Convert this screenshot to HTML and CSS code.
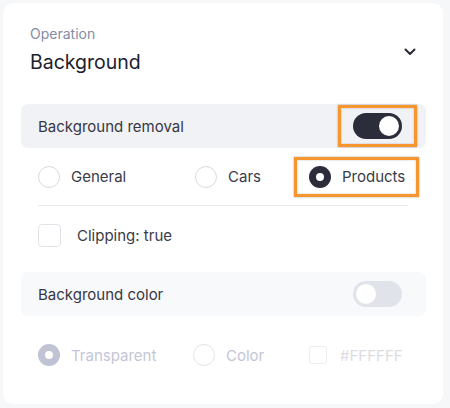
FILE: index.html
```html
<!DOCTYPE html>
<html>
<head>
<meta charset="utf-8">
<link rel="stylesheet" href="styles.css">
</head>
<body>
<div class="card">
  <div class="select">
    <div class="select-text">
      <div class="select-label">Operation</div>
      <div class="select-value">Background</div>
    </div>
    <svg class="chevron" width="12" height="8" viewBox="0 0 12 8"><path d="M1.5 1.5 L6 6 L10.5 1.5" fill="none" stroke="#2a2b36" stroke-width="2" stroke-linecap="round" stroke-linejoin="round"/></svg>
  </div>

  <div class="section on">
    <span class="section-title">Background removal</span>
    <span class="hl hl-toggle"><span class="toggle toggle-on"><span class="knob"></span></span></span>
  </div>

  <div class="radios radios-top">
    <label class="opt"><span class="radio"></span><span>General</span></label>
    <label class="opt"><span class="radio"></span><span>Cars</span></label>
    <label class="opt hl hl-opt"><span class="radio radio-on"></span><span>Products</span></label>
  </div>
  <div class="divider"></div>

  <div class="check-row">
    <span class="checkbox"></span><span>Clipping: true</span>
  </div>

  <div class="section off">
    <span class="section-title">Background color</span>
    <span class="toggle toggle-off"><span class="knob"></span></span>
  </div>

  <div class="radios radios-bottom disabled">
    <label class="opt"><span class="radio radio-dis-on"></span><span>Transparent</span></label>
    <label class="opt"><span class="radio radio-dis"></span><span>Color</span></label>
    <label class="opt hex"><span class="checkbox small"></span><span>#FFFFFF</span></label>
  </div>
</div>
</body>
</html>
```
FILE: styles.css
```css
* { box-sizing: border-box; }
html, body { margin: 0; padding: 0; }
body {
  background: #f6f7f9;
  font-family: Inter, "Noto Sans", sans-serif;
  width: 450px;
  height: 408px;
  padding: 3px 0 0 3px;
}
.card {
  width: 440px;
  height: 401px;
  background: #ffffff;
  border-radius: 10px;
  padding: 21px 17px 0 18px;
}
.select {
  display: flex;
  align-items: center;
  justify-content: space-between;
  padding: 0 10px 0 9px;
  height: 61px;
}
.select-text { align-self: flex-start; }
.select-label {
  font-size: 14px;
  line-height: 20px;
  color: #858ca4;
}
.select-value {
  font-size: 19.5px;
  line-height: 28px;
  color: #20212c;
  margin-top: 4px;
}
.chevron { margin-top: -6px; }
.section {
  margin-top: 19px;
  height: 44px;
  border-radius: 7px;
  display: flex;
  align-items: center;
  justify-content: space-between;
  padding: 0 24px 0 17px;
  font-size: 15px;
  color: #363744;
}
.section.on { background: #f1f2f6; }
.section.off { background: #f8f9fb; margin-top: 25px; }
.toggle {
  width: 49px;
  height: 26px;
  border-radius: 13px;
  display: flex;
  align-items: center;
  padding: 0 3px;
}
.knob {
  width: 20px;
  height: 20px;
  border-radius: 50%;
  background: #ffffff;
}
.toggle-on { background: #2c2d3a; justify-content: flex-end; }
.toggle-off { background: #e1e3ea; justify-content: flex-start; }
.hl {
  border: 3px solid #f7952f;
  box-shadow: 0 0 2px rgba(0,0,0,0.35), inset 0 0 2px rgba(0,0,0,0.25);
}
.hl-toggle {
  margin-right: -15px;
  padding: 5px 12px;
  display: flex;
}
.radios {
  display: grid;
  align-items: center;
  padding-left: 17px;
  font-size: 15px;
  color: #3a3b48;
}
.radios-top {
  grid-template-columns: 157px 114px auto;
  height: 57px;
}
.opt {
  display: flex;
  align-items: center;
  gap: 11px;
}
.hl-opt {
  margin-left: -15px;
  width: 125px;
  height: 40px;
  padding-left: 12px;
}
.radio {
  width: 22px;
  height: 22px;
  border-radius: 50%;
  border: 1px solid #d8dae2;
  display: inline-block;
  flex: none;
}
.radio-on {
  border: 7px solid #2c2d3a;
  background: #ffffff;
}
.divider {
  height: 1px;
  background: #e9eaee;
  margin: 0 18px 0 17px;
}
.check-row {
  display: flex;
  align-items: center;
  gap: 16px;
  padding-left: 17px;
  margin-top: 17px;
  height: 24px;
  font-size: 15px;
  color: #3a3b48;
}
.checkbox {
  width: 23px;
  height: 23px;
  border: 1px solid #e2e3e9;
  border-radius: 4px;
  display: inline-block;
  flex: none;
}
.radios-bottom {
  grid-template-columns: 155px 116px auto;
  margin-top: 21px;
  height: 36px;
  color: #c3c6d7;
}
.radio-dis-on {
  border: 7px solid #bfc3d3;
  background: #ffffff;
}
.radio-dis { border-color: #e4e5eb; }
.hex { color: #dcdde2; gap: 13px; }
.checkbox.small {
  width: 18px;
  height: 18px;
  border-color: #ededf0;
  border-radius: 3px;
}
```
